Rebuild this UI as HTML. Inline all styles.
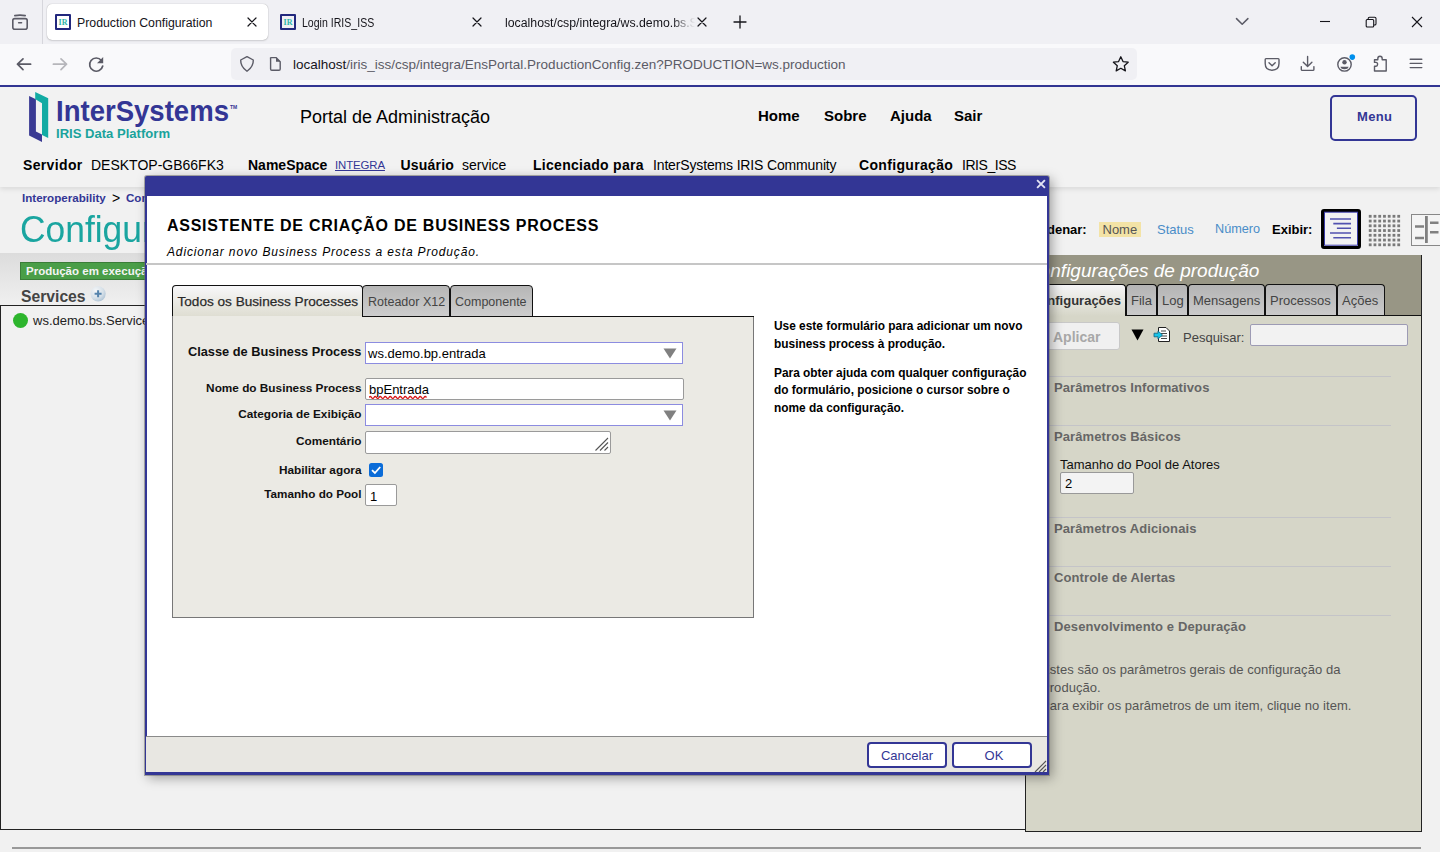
<!DOCTYPE html>
<html><head><meta charset="utf-8">
<style>
*{box-sizing:border-box;margin:0;padding:0}
html,body{width:1440px;height:852px;overflow:hidden;background:#f2f2f2;font-family:"Liberation Sans",sans-serif;position:relative}
.a{position:absolute;white-space:nowrap;line-height:1}
.b{font-weight:bold}
</style></head><body>
<!-- ===== BROWSER CHROME ===== -->
<div class="a" style="left:0;top:0;width:1440px;height:44px;background:#f0f0f4"></div>
<div class="a" style="left:42px;top:0;width:1px;height:44px;background:#d6d6dc"></div>
<div class="a" style="left:0;top:44px;width:1440px;height:41px;background:#f9f9fb"></div>
<div class="a" style="left:0;top:85px;width:1440px;height:2px;background:#333695"></div>
<!-- url bar -->
<div class="a" style="left:231px;top:48px;width:906px;height:32px;background:#f0f0f4;border-radius:5px"></div>
<!-- active tab -->
<div class="a" style="left:47px;top:4px;width:221px;height:36px;background:#fff;border-radius:5px;box-shadow:0 0 1px rgba(0,0,0,.35),0 1px 2px rgba(0,0,0,.12)"></div>
<svg class="a" style="left:0;top:0" width="1440" height="85" viewBox="0 0 1440 85" fill="none" stroke-linecap="round" stroke-linejoin="round">
 <!-- tab list icon -->
 <g stroke="#5b5b66" stroke-width="1.6">
  <rect x="12.8" y="18.6" width="14.4" height="10.6" rx="2"/>
  <path d="M14.8 15.6 Q20 14.6 25.2 15.6"/>
  <path d="M18.6 22.7 H21.6" stroke-width="1.4"/>
 </g>
 <!-- favicons -->
 <rect x="56" y="15" width="14" height="14" stroke="#22287e" stroke-width="2"/>
 <text x="63" y="25.2" font-family="Liberation Serif" font-weight="bold" font-size="8" fill="#2fb5a8" text-anchor="middle">IR</text>
 <rect x="281" y="15" width="14" height="14" stroke="#22287e" stroke-width="2"/>
 <text x="288" y="25.2" font-family="Liberation Serif" font-weight="bold" font-size="8" fill="#2fb5a8" text-anchor="middle">IR</text>
 <!-- tab close icons -->
 <g stroke="#15141a" stroke-width="1.2">
  <path d="M248 18 L256 26 M256 18 L248 26"/>
  <path d="M473 18 L481 26 M481 18 L473 26"/>
  <path d="M698 18 L706 26 M706 18 L698 26"/>
 </g>
 <!-- plus -->
 <path d="M740 16 V28 M734 22 H746" stroke="#15141a" stroke-width="1.3"/>
 <!-- chevron -->
 <path d="M1236.5 18.6 L1242.2 24.3 L1247.9 18.6" stroke="#5b5b66" stroke-width="1.5"/>
 <!-- window controls -->
 <g stroke="#15141a" stroke-width="1.1" stroke-linecap="butt">
  <path d="M1320 21.5 H1330"/>
  <rect x="1366.2" y="19.5" width="7.5" height="7.5" rx="1"/>
  <path d="M1368.2 19.5 V18.5 Q1368.2 17.2 1369.5 17.2 H1374.7 Q1376 17.2 1376 18.5 V23.7 Q1376 25 1374.7 25 H1373.7"/>
  <path d="M1412 17 L1422 27 M1422 17 L1412 27"/>
 </g>
 <!-- nav arrows -->
 <g stroke-width="1.7">
  <path d="M17.5 64.2 H30.6 M23 58.8 L17.5 64.2 L23 69.6" stroke="#5b5b66"/>
  <path d="M53.4 64.2 H66.5 M61 58.8 L66.5 64.2 L61 69.6" stroke="#b6b6bb"/>
 </g>
 <path d="M101.4 60.5 A6.6 6.6 0 1 0 102.7 66" stroke="#5b5b66" stroke-width="1.7"/>
 <path d="M103.2 57 V63.2 H97 Z" fill="#5b5b66"/>
 <!-- shield, page -->
 <path d="M247 56.6 L253.3 60 Q253.6 66.5 247 71.3 Q240.4 66.5 240.7 60 Z" stroke="#5b5b66" stroke-width="1.4"/>
 <path d="M270.6 58.4 Q270 57.6 271.6 57.6 H276 L280.2 61.8 V69 Q280.2 70.2 279 70.2 H271.8 Q270.6 70.2 270.6 69 Z" stroke="#5b5b66" stroke-width="1.4"/>
 <path d="M276 57.6 L280.2 61.8 H276 Z" fill="#5b5b66"/>
 <!-- star -->
 <path d="M1120.8 56.8 L1123 61.6 L1128.2 62.2 L1124.3 65.7 L1125.4 70.9 L1120.8 68.3 L1116.2 70.9 L1117.3 65.7 L1113.4 62.2 L1118.6 61.6 Z" stroke="#15141a" stroke-width="1.3"/>
 <!-- pocket -->
 <path d="M1266 58.6 H1278.2 Q1279 58.6 1279 59.4 V63.6 Q1279 70.2 1272.1 70.2 Q1265.2 70.2 1265.2 63.6 V59.4 Q1265.2 58.6 1266 58.6 Z" stroke="#5b5b66" stroke-width="1.4"/>
 <path d="M1269 62.7 L1272.1 65.8 L1275.2 62.7" stroke="#5b5b66" stroke-width="1.4"/>
 <!-- download -->
 <path d="M1307.6 56.4 V66.2 M1303.3 62.2 L1307.6 66.4 L1311.9 62.2 M1301.3 66.6 V69.4 Q1301.3 70.4 1302.3 70.4 H1312.9 Q1313.9 70.4 1313.9 69.4 V66.6" stroke="#5b5b66" stroke-width="1.4"/>
 <!-- account -->
 <circle cx="1344.5" cy="64.4" r="6.7" stroke="#5b5b66" stroke-width="1.4"/>
 <circle cx="1344.5" cy="62.2" r="2.2" fill="#5b5b66"/>
 <path d="M1340.4 66.8 H1348.6 Q1348 69.3 1344.5 69.3 Q1341 69.3 1340.4 66.8 Z" fill="#5b5b66"/>
 <circle cx="1352.3" cy="57.1" r="2.8" fill="#0090ed"/>
 <!-- extensions -->
 <path d="M1377.8 59.8 V58.7 Q1377.8 56.3 1380 56.3 Q1382.2 56.3 1382.2 58.7 V59.8 H1386.2 V71 H1374.5 V66.2 H1376 Q1377.6 66.2 1377.6 64.3 Q1377.6 62.4 1376 62.4 H1374.5 V59.8 Z" stroke="#5b5b66" stroke-width="1.4"/>
 <!-- hamburger -->
 <path d="M1410.2 59.2 H1421.8 M1410.2 63.4 H1421.8 M1410.2 67.6 H1421.8" stroke="#5b5b66" stroke-width="1.4"/>
</svg>
<div class="a" style="left:77px;top:17.2px;font-size:12.3px;color:#15141a">Production Configuration</div>
<div class="a" style="left:302px;top:17.2px;font-size:12.5px;color:#15141a;transform:scaleX(0.845);transform-origin:0 0">Login IRIS_ISS</div>
<div class="a" style="left:505px;top:17.2px;font-size:12.3px;color:#15141a;width:190px;height:18px;overflow:hidden;-webkit-mask-image:linear-gradient(90deg,#000 88%,transparent)">localhost/csp/integra/ws.demo.bs.Service</div>
<div class="a" style="left:293px;top:58px;font-size:13.5px;color:#15141a">localhost<span style="color:#5b5b66">/iris_iss/csp/integra/EnsPortal.ProductionConfig.zen?PRODUCTION=ws.production</span></div>

<!-- ===== PAGE HEADER ===== -->
<div class="a" style="left:0;top:187px;width:1440px;height:665px;background:#f1f1f1"></div>
<div class="a" style="left:0;top:87px;width:1440px;height:100px;background:#f2f2f2;box-shadow:0 2px 5px rgba(0,0,0,.10)"></div>
<!-- logo -->
<svg class="a" style="left:20px;top:88px" width="230" height="60" viewBox="20 88 230 60">
 <path d="M29.1 96 L35.9 99.3 V131.6 L42 134.6 V142.1 L29.1 135.6 Z" fill="#3a3a93"/>
 <path d="M35.2 92.1 L48.2 98.2 V138 L42 135 V103.3 L35.9 99.6 L35.2 99.3 Z" fill="#12aba3"/>
 <text x="56" y="121" font-family="Liberation Sans" font-weight="bold" font-size="30" fill="#333695" textLength="173" lengthAdjust="spacingAndGlyphs">InterSystems</text>
 <text x="230" y="109" font-family="Liberation Sans" font-weight="bold" font-size="5" fill="#333695">TM</text>
 <text x="56" y="137.6" font-family="Liberation Sans" font-weight="bold" font-size="13.6" fill="#1aa39c" textLength="114" lengthAdjust="spacingAndGlyphs">IRIS Data Platform</text>
</svg>
<div class="a" style="left:300px;top:108px;font-size:18px;color:#000">Portal de Administração</div>
<div class="a b" style="left:758px;top:108px;font-size:15px;color:#000">Home</div>
<div class="a b" style="left:824px;top:108px;font-size:15px;color:#000">Sobre</div>
<div class="a b" style="left:890px;top:108px;font-size:15px;color:#000">Ajuda</div>
<div class="a b" style="left:954px;top:108px;font-size:15px;color:#000">Sair</div>
<div class="a" style="left:1330px;top:95px;width:87px;height:46px;border:2px solid #333695;border-radius:5px"></div>
<div class="a b" style="left:1357px;top:110px;font-size:13px;color:#333695;letter-spacing:0.35px">Menu</div>

<div class="a b" style="left:23px;top:158px;font-size:14px;letter-spacing:0.35px">Servidor</div>
<div class="a" style="left:91px;top:158px;font-size:14px">DESKTOP-GB66FK3</div>
<div class="a b" style="left:248px;top:158px;font-size:14px">NameSpace</div>
<div class="a" style="left:335px;top:160px;font-size:11.4px;color:#333695;text-decoration:underline;letter-spacing:-0.1px">INTEGRA</div>
<div class="a b" style="left:400.5px;top:158px;font-size:14px;letter-spacing:0.2px">Usuário</div>
<div class="a" style="left:462px;top:158px;font-size:14px">service</div>
<div class="a b" style="left:533px;top:158px;font-size:14px;letter-spacing:0.28px">Licenciado para</div>
<div class="a" style="left:653px;top:158px;font-size:14px;letter-spacing:-0.15px">InterSystems IRIS Community</div>
<div class="a b" style="left:859px;top:158px;font-size:14px;letter-spacing:0.33px">Configuração</div>
<div class="a" style="left:962px;top:158px;font-size:14px;letter-spacing:-0.45px">IRIS_ISS</div>

<!-- ===== LEFT CONTENT ===== -->
<div class="a b" style="left:22px;top:192px;font-size:11.6px;color:#333695">Interoperability</div><div class="a" style="left:112px;top:190.5px;font-size:14px;color:#000">&gt;</div><div class="a b" style="left:126px;top:192px;font-size:11.6px;color:#333695">Configuração</div>
<div class="a" style="left:20px;top:213px;font-size:35.4px;color:#1aa5a0;transform:scaleY(1.05);transform-origin:0 30px">Configuração da Produção</div>
<div class="a" style="left:0;top:253px;width:1025px;height:52px;background:linear-gradient(#dcdcdc,#f0f0f0)"></div>
<div class="a" style="left:20px;top:262px;width:300px;height:18px;background:#4a9e48;border:1px solid #3a7d38"></div>
<div class="a b" style="left:26px;top:265.8px;font-size:11.5px;color:#f4f4f4">Produção em execução</div>
<div class="a b" style="left:21px;top:288.7px;font-size:15.7px;color:#444">Services</div>
<svg class="a" style="left:89px;top:285px" width="18" height="18"><defs><radialGradient id="pg" cx="0.35" cy="0.3" r="0.8"><stop offset="0" stop-color="#f4f6f8"/><stop offset="0.6" stop-color="#d6e0e8"/><stop offset="1" stop-color="#a9bfd2"/></radialGradient></defs><circle cx="9.1" cy="8.8" r="7.6" fill="url(#pg)"/><path d="M9.1 5.3 V12.3 M5.6 8.8 H12.6" stroke="#5584ad" stroke-width="2"/></svg>
<div class="a" style="left:0;top:305px;width:1026px;height:525px;border:1px solid #222;background:#f1f1f1"></div>
<div class="a" style="left:13px;top:313px;width:15px;height:15px;border-radius:50%;background:#2db52d"></div>
<div class="a" style="left:33px;top:314px;font-size:13px;color:#222">ws.demo.bs.Service</div>

<!-- ===== RIGHT PANEL ===== -->
<div class="a" style="left:1025px;top:255px;width:397px;height:577px;background:#d6d6c8;border:1px solid #222;border-top:none"></div>
<div class="a" style="left:1026px;top:255px;width:395px;height:60px;background:#989685"></div>
<div class="a" style="left:1026px;top:260.5px;font-size:19px;font-style:italic;color:#fff">Configurações de produção</div>
<!-- tabs -->
<div class="a" style="left:1026px;top:284px;width:100px;height:32px;background:linear-gradient(#f5f5f7,#e0e0d6 70%,#d6d6c8);border:1px solid #111;border-bottom:none;border-radius:4px 4px 0 0"></div>
<div class="a b" style="left:1030px;top:294px;font-size:13px;color:#333">Configurações</div>
<div class="a" style="left:1126px;top:284px;width:31px;height:32px;background:linear-gradient(#b4b4b4,#cbcbcb);border:1.5px solid #111;border-bottom:none;border-radius:4px 4px 0 0"></div>
<div class="a" style="left:1131px;top:294px;font-size:13px;color:#444">Fila</div>
<div class="a" style="left:1157px;top:284px;width:31px;height:32px;background:linear-gradient(#b4b4b4,#cbcbcb);border:1.5px solid #111;border-bottom:none;border-radius:4px 4px 0 0"></div>
<div class="a" style="left:1162px;top:294px;font-size:13px;color:#444">Log</div>
<div class="a" style="left:1188px;top:284px;width:77px;height:32px;background:linear-gradient(#b4b4b4,#cbcbcb);border:1.5px solid #111;border-bottom:none;border-radius:4px 4px 0 0"></div>
<div class="a" style="left:1193px;top:294px;font-size:13px;color:#444">Mensagens</div>
<div class="a" style="left:1265px;top:284px;width:72px;height:32px;background:linear-gradient(#b4b4b4,#cbcbcb);border:1.5px solid #111;border-bottom:none;border-radius:4px 4px 0 0"></div>
<div class="a" style="left:1270px;top:294px;font-size:13px;color:#444">Processos</div>
<div class="a" style="left:1337px;top:284px;width:48px;height:32px;background:linear-gradient(#b4b4b4,#cbcbcb);border:1.5px solid #111;border-bottom:none;border-radius:4px 4px 0 0"></div>
<div class="a" style="left:1342px;top:294px;font-size:13px;color:#444">Ações</div>
<div class="a" style="left:1126px;top:315px;width:295px;height:1px;background:#111"></div>
<!-- toolbar -->
<div class="a" style="left:1030px;top:322px;width:90px;height:28px;background:#f0f0f0;border:1px solid #c8c8c8;border-radius:3px"></div>
<div class="a b" style="left:1053px;top:330px;font-size:14px;color:#a8a8a8">Aplicar</div>
<svg class="a" style="left:1131px;top:329px" width="13" height="12"><path d="M0.5 0.5 H12.5 L6.5 11.5 Z" fill="#000"/></svg>
<svg class="a" style="left:1153px;top:326px" width="18" height="17" viewBox="0 0 18 17">
 <path d="M5.5 1.5 H13 L16.5 5 V15.5 H5.5 Z" fill="#fff" stroke="#222" stroke-width="1"/>
 <path d="M8 5 H13 M8 7.5 H14 M8 10 H14 M8 12.5 H14" stroke="#333" stroke-width="0.9"/>
 <path d="M1 7.2 H5 V5 L9.5 9 L5 13 V10.8 H1 Z" fill="#19c5e8" stroke="#0a5f80" stroke-width="0.8"/>
</svg>
<div class="a" style="left:1183px;top:331px;font-size:13px;color:#444">Pesquisar:</div>
<div class="a" style="left:1250px;top:324px;width:158px;height:22px;background:#f2f2f2;border:1px solid #9d9bb4;border-radius:2px"></div>
<!-- sections -->
<div class="a" style="left:1045px;top:376px;width:346px;height:1px;background:#c4c4c8"></div>
<div class="a b" style="left:1054px;top:381px;font-size:13px;color:#666;letter-spacing:0.1px">Parâmetros Informativos</div>
<div class="a" style="left:1045px;top:425px;width:346px;height:1px;background:#c4c4c8"></div>
<div class="a b" style="left:1054px;top:430px;font-size:13px;color:#666;letter-spacing:0.1px">Parâmetros Básicos</div>
<div class="a" style="left:1060px;top:458px;font-size:13px;color:#111">Tamanho do Pool de Atores</div>
<div class="a" style="left:1060px;top:472px;width:74px;height:22px;background:#f3f3f3;border:1px solid #999;border-radius:2px"></div>
<div class="a" style="left:1065px;top:477px;font-size:13px;color:#000">2</div>
<div class="a" style="left:1045px;top:517px;width:346px;height:1px;background:#c4c4c8"></div>
<div class="a b" style="left:1054px;top:522px;font-size:13px;color:#666;letter-spacing:0.1px">Parâmetros Adicionais</div>
<div class="a" style="left:1045px;top:566px;width:346px;height:1px;background:#c4c4c8"></div>
<div class="a b" style="left:1054px;top:571px;font-size:13px;color:#666;letter-spacing:0.1px">Controle de Alertas</div>
<div class="a" style="left:1045px;top:615px;width:346px;height:1px;background:#c4c4c8"></div>
<div class="a b" style="left:1054px;top:620px;font-size:13px;color:#666;letter-spacing:0.1px">Desenvolvimento e Depuração</div>
<div class="a" style="left:1041px;top:660.5px;font-size:13px;line-height:18px;color:#555;letter-spacing:0.05px">Estes são os parâmetros gerais de configuração da<br>Produção.<br>Para exibir os parâmetros de um item, clique no item.</div>
<!-- sort / view bar -->
<div class="a b" style="left:1031.8px;top:222.5px;font-size:13px;color:#000">Ordenar:</div>
<div class="a" style="left:1099px;top:222px;width:42px;height:15px;background:#f3e3a6"></div>
<div class="a" style="left:1102.5px;top:222.5px;font-size:13px;color:#555">Nome</div>
<div class="a" style="left:1157px;top:222.5px;font-size:13px;color:#4a8dc8">Status</div>
<div class="a" style="left:1215px;top:222.5px;font-size:12.7px;color:#4a8dc8">Número</div>
<div class="a b" style="left:1272px;top:222.5px;font-size:13px;color:#000">Exibir:</div>
<div class="a" style="left:1321px;top:209px;width:40px;height:40px;border:3px solid #000;border-radius:3px;background:#f2f2f2"></div>
<svg class="a" style="left:0;top:0" width="1440" height="260" viewBox="0 0 1440 260">
 <rect x="1324.5" y="212.2" width="33" height="33" fill="none" stroke="#3c3ca8" stroke-width="1"/>
 <path d="M1330 219 H1351 M1333.3 223.6 H1351 M1336.9 228.3 H1351 M1330 233 H1351 M1333.3 237.7 H1351" stroke="#5252b0" stroke-width="1.6"/>
 <rect x="1368.80" y="214.90" width="2.8" height="2.8" fill="#7a7a7a"/><rect x="1368.80" y="219.65" width="2.8" height="2.8" fill="#7a7a7a"/><rect x="1368.80" y="224.40" width="2.8" height="2.8" fill="#7a7a7a"/><rect x="1368.80" y="229.15" width="2.8" height="2.8" fill="#7a7a7a"/><rect x="1368.80" y="233.90" width="2.8" height="2.8" fill="#7a7a7a"/><rect x="1368.80" y="238.65" width="2.8" height="2.8" fill="#7a7a7a"/><rect x="1368.80" y="243.40" width="2.8" height="2.8" fill="#7a7a7a"/><rect x="1373.55" y="214.90" width="2.8" height="2.8" fill="#7a7a7a"/><rect x="1373.55" y="219.65" width="2.8" height="2.8" fill="#7a7a7a"/><rect x="1373.55" y="224.40" width="2.8" height="2.8" fill="#7a7a7a"/><rect x="1373.55" y="229.15" width="2.8" height="2.8" fill="#7a7a7a"/><rect x="1373.55" y="233.90" width="2.8" height="2.8" fill="#7a7a7a"/><rect x="1373.55" y="238.65" width="2.8" height="2.8" fill="#7a7a7a"/><rect x="1373.55" y="243.40" width="2.8" height="2.8" fill="#7a7a7a"/><rect x="1378.30" y="214.90" width="2.8" height="2.8" fill="#7a7a7a"/><rect x="1378.30" y="219.65" width="2.8" height="2.8" fill="#7a7a7a"/><rect x="1378.30" y="224.40" width="2.8" height="2.8" fill="#7a7a7a"/><rect x="1378.30" y="229.15" width="2.8" height="2.8" fill="#7a7a7a"/><rect x="1378.30" y="233.90" width="2.8" height="2.8" fill="#7a7a7a"/><rect x="1378.30" y="238.65" width="2.8" height="2.8" fill="#7a7a7a"/><rect x="1378.30" y="243.40" width="2.8" height="2.8" fill="#7a7a7a"/><rect x="1383.05" y="214.90" width="2.8" height="2.8" fill="#7a7a7a"/><rect x="1383.05" y="219.65" width="2.8" height="2.8" fill="#7a7a7a"/><rect x="1383.05" y="224.40" width="2.8" height="2.8" fill="#7a7a7a"/><rect x="1383.05" y="229.15" width="2.8" height="2.8" fill="#7a7a7a"/><rect x="1383.05" y="233.90" width="2.8" height="2.8" fill="#7a7a7a"/><rect x="1383.05" y="238.65" width="2.8" height="2.8" fill="#7a7a7a"/><rect x="1383.05" y="243.40" width="2.8" height="2.8" fill="#7a7a7a"/><rect x="1387.80" y="214.90" width="2.8" height="2.8" fill="#7a7a7a"/><rect x="1387.80" y="219.65" width="2.8" height="2.8" fill="#7a7a7a"/><rect x="1387.80" y="224.40" width="2.8" height="2.8" fill="#7a7a7a"/><rect x="1387.80" y="229.15" width="2.8" height="2.8" fill="#7a7a7a"/><rect x="1387.80" y="233.90" width="2.8" height="2.8" fill="#7a7a7a"/><rect x="1387.80" y="238.65" width="2.8" height="2.8" fill="#7a7a7a"/><rect x="1387.80" y="243.40" width="2.8" height="2.8" fill="#7a7a7a"/><rect x="1392.55" y="214.90" width="2.8" height="2.8" fill="#7a7a7a"/><rect x="1392.55" y="219.65" width="2.8" height="2.8" fill="#7a7a7a"/><rect x="1392.55" y="224.40" width="2.8" height="2.8" fill="#7a7a7a"/><rect x="1392.55" y="229.15" width="2.8" height="2.8" fill="#7a7a7a"/><rect x="1392.55" y="233.90" width="2.8" height="2.8" fill="#7a7a7a"/><rect x="1392.55" y="238.65" width="2.8" height="2.8" fill="#7a7a7a"/><rect x="1392.55" y="243.40" width="2.8" height="2.8" fill="#7a7a7a"/><rect x="1397.30" y="214.90" width="2.8" height="2.8" fill="#7a7a7a"/><rect x="1397.30" y="219.65" width="2.8" height="2.8" fill="#7a7a7a"/><rect x="1397.30" y="224.40" width="2.8" height="2.8" fill="#7a7a7a"/><rect x="1397.30" y="229.15" width="2.8" height="2.8" fill="#7a7a7a"/><rect x="1397.30" y="233.90" width="2.8" height="2.8" fill="#7a7a7a"/><rect x="1397.30" y="238.65" width="2.8" height="2.8" fill="#7a7a7a"/><rect x="1397.30" y="243.40" width="2.8" height="2.8" fill="#7a7a7a"/>
 <rect x="1411.5" y="214.5" width="40" height="31" fill="#f4f4f4" stroke="#888" stroke-width="1"/>
 <path d="M1426.4 216 V243" stroke="#808080" stroke-width="2.8"/>
 <path d="M1415 226.4 H1424 M1415 237.9 H1424 M1430 222.7 H1438.5 M1430 232.3 H1438.5" stroke="#808080" stroke-width="2.5"/>
</svg>

<!-- ===== BOTTOM LINE ===== -->
<div class="a" style="left:12px;top:847px;width:1409px;height:2px;background:#999"></div>

<!-- ===== DIALOG ===== -->
<div class="a" style="left:145px;top:176px;width:904px;height:599px;background:#fff;border:2px solid #333695;border-top:20px solid #333695;border-bottom-width:3px;border-radius:2px 2px 0 0;box-shadow:0 0 0 1px rgba(110,110,110,.55),3px 3px 12px rgba(0,0,0,.35)"></div>
<svg class="a" style="left:1036px;top:179px" width="10" height="10" viewBox="0 0 10 10"><path d="M1.8 1.8 L8.2 8.2 M8.2 1.8 L1.8 8.2" stroke="#e4e4f4" stroke-width="1.9" stroke-linecap="square"/></svg>
<div class="a b" style="left:167px;top:217.5px;font-size:16px;letter-spacing:0.74px;color:#000">ASSISTENTE DE CRIAÇÃO DE BUSINESS PROCESS</div>
<div class="a" style="left:167px;top:245.5px;font-size:12px;font-style:italic;letter-spacing:0.85px;color:#000">Adicionar novo Business Process a esta Produção.</div>
<div class="a" style="left:146px;top:263px;width:901px;height:2px;background:#c6c6c6"></div>
<!-- tabs -->
<div class="a" style="left:172px;top:285px;width:191px;height:33px;background:linear-gradient(#f7f7f9,#e4e3da 75%,#dddcd0);border:1px solid #111;border-bottom:none;border-radius:4px 4px 0 0"></div>
<div class="a" style="left:177.5px;top:295.1px;font-size:13.6px;color:#2a2a2a;-webkit-text-stroke:0.25px #2a2a2a">Todos os Business Processes</div>
<div class="a" style="left:362px;top:285px;width:88px;height:32px;background:linear-gradient(#b6b6b6,#cdcdcd);border:1.5px solid #111;border-radius:4px 4px 0 0"></div>
<div class="a" style="left:368px;top:295.7px;font-size:12.5px;color:#444">Roteador X12</div>
<div class="a" style="left:449.5px;top:285px;width:83px;height:32px;background:linear-gradient(#b6b6b6,#cdcdcd);border:1.5px solid #111;border-radius:4px 4px 0 0"></div>
<div class="a" style="left:455px;top:295.7px;font-size:12.5px;color:#444">Componente</div>
<div class="a" style="left:172px;top:316px;width:582px;height:302px;background:#ebeae4;border:1px solid #777;border-top:none"></div>
<div class="a" style="left:362px;top:316px;width:392px;height:1px;background:#111"></div>
<!-- form -->
<div class="a b" style="left:0;width:361.5px;text-align:right;top:346px;font-size:12.8px;color:#111">Classe de Business Process</div>
<div class="a" style="left:365px;top:342px;width:318px;height:22px;background:#fff;border:1px solid #8c8ce0"></div>
<div class="a" style="left:368px;top:346.5px;font-size:13px;color:#000">ws.demo.bp.entrada</div>
<svg class="a" style="left:663px;top:348px" width="14" height="11"><path d="M0.5 0.5 H13.5 L7 10.5 Z" fill="#808080"/></svg>
<div class="a b" style="left:0;width:361.5px;text-align:right;top:383.2px;font-size:11.8px;color:#111">Nome do Business Process</div>
<div class="a" style="left:365px;top:378px;width:319px;height:22px;background:#fff;border:1px solid #9a9a9a;border-radius:2px"></div>
<div class="a" style="left:369px;top:383px;font-size:13px;color:#000">bpEntrada</div>
<svg class="a" style="left:369px;top:395px" width="59" height="4"><path d="M0 2.5 Q1.25 0.5 2.5 2.5 T5 2.5 T7.5 2.5 T10 2.5 T12.5 2.5 T15 2.5 T17.5 2.5 T20 2.5 T22.5 2.5 T25 2.5 T27.5 2.5 T30 2.5 T32.5 2.5 T35 2.5 T37.5 2.5 T40 2.5 T42.5 2.5 T45 2.5 T47.5 2.5 T50 2.5 T52.5 2.5 T55 2.5 T57.5 2.5" stroke="#d81818" stroke-width="1.3" fill="none"/></svg>
<div class="a b" style="left:0;width:361.5px;text-align:right;top:408.8px;font-size:11.8px;color:#111">Categoria de Exibição</div>
<div class="a" style="left:365px;top:404px;width:318px;height:22px;background:#fff;border:1px solid #8c8ce0"></div>
<svg class="a" style="left:663px;top:410px" width="14" height="11"><path d="M0.5 0.5 H13.5 L7 10.5 Z" fill="#808080"/></svg>
<div class="a b" style="left:0;width:361.5px;text-align:right;top:436px;font-size:11.8px;color:#111">Comentário</div>
<div class="a" style="left:365px;top:431px;width:246px;height:23px;background:#fff;border:1px solid #9a9a9a;border-radius:2px"></div>
<svg class="a" style="left:594px;top:436px" width="15" height="16"><path d="M14 2 L1.5 14.5 M14 6.5 L6 14.5 M14 11 L10.5 14.5" stroke="#555" stroke-width="1.1"/></svg>
<div class="a b" style="left:0;width:361.5px;text-align:right;top:464.7px;font-size:11.8px;color:#111">Habilitar agora</div>
<div class="a" style="left:369px;top:463px;width:14px;height:14px;background:#0b6cd8;border-radius:2.5px"></div>
<svg class="a" style="left:369px;top:463px" width="14" height="14"><path d="M3 7.2 L5.9 10 L11.2 4" stroke="#fff" stroke-width="1.8" fill="none"/></svg>
<div class="a b" style="left:0;width:361.5px;text-align:right;top:487.5px;font-size:11.7px;color:#111">Tamanho do Pool</div>
<div class="a" style="left:365px;top:484px;width:32px;height:22px;background:#fff;border:1px solid #9a9a9a;border-radius:2px"></div>
<div class="a" style="left:370px;top:490px;font-size:13px;color:#000">1</div>
<!-- help text -->
<div class="a b" style="left:774px;top:318px;font-size:11.9px;line-height:17.65px;color:#000;white-space:normal;width:270px">Use este formulário para adicionar um novo<br>business process à produção.</div>
<div class="a b" style="left:774px;top:364.5px;font-size:11.9px;line-height:17.65px;color:#000;white-space:normal;width:270px">Para obter ajuda com qualquer configuração<br>do formulário, posicione o cursor sobre o<br>nome da configuração.</div>
<!-- footer -->
<div class="a" style="left:146px;top:736px;width:901px;height:1px;background:#8a8a8a"></div>
<div class="a" style="left:146px;top:737px;width:901px;height:35px;background:#e8e7e2"></div>
<div class="a" style="left:867px;top:742px;width:80px;height:26px;background:#fff;border:2px solid #333695;border-radius:4px"></div>
<div class="a" style="left:867px;top:749px;width:80px;text-align:center;font-size:13px;color:#333695">Cancelar</div>
<div class="a" style="left:952px;top:742px;width:80px;height:26px;background:#fff;border:2px solid #333695;border-radius:4px"></div>
<div class="a" style="left:954px;top:749px;width:80px;text-align:center;font-size:13px;color:#333695">OK</div>
<svg class="a" style="left:1034px;top:760px" width="13" height="13"><path d="M12 1 L1 12 M12 5 L5 12 M12 9 L9 12" stroke="#555" stroke-width="1.1"/></svg>
</body></html>
